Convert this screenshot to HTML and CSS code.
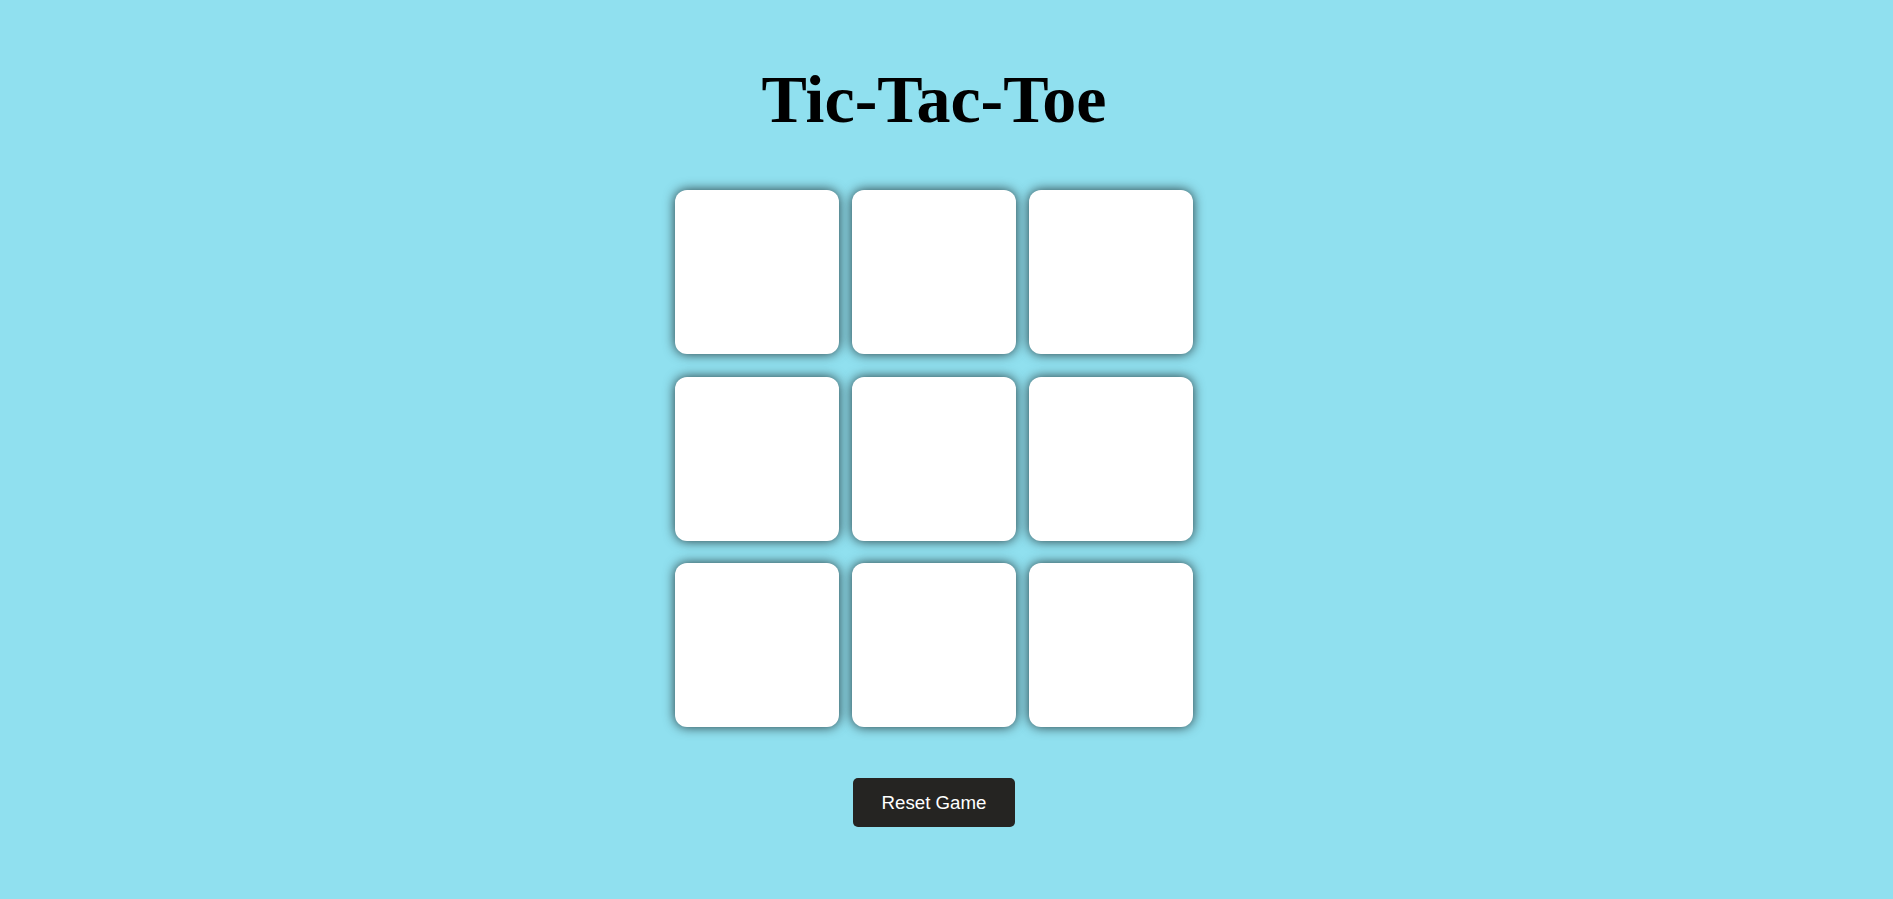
FILE: index.html
```html
<!DOCTYPE html>
<html lang="en">
<head>
<meta charset="utf-8">
<title>Tic-Tac-Toe</title>
<link rel="stylesheet" href="styles.css">
</head>
<body>
<main class="page">
  <h1 class="title">Tic-Tac-Toe</h1>
  <div class="board">
    <div class="cell"></div>
    <div class="cell"></div>
    <div class="cell"></div>
    <div class="cell"></div>
    <div class="cell"></div>
    <div class="cell"></div>
    <div class="cell"></div>
    <div class="cell"></div>
    <div class="cell"></div>
  </div>
  <button class="reset" type="button">Reset Game</button>
</main>
</body>
</html>
```

FILE: styles.css
```css
html, body {
  margin: 0;
  padding: 0;
  background: #90e0ef;
  height: 100%;
}

.page {
  display: flex;
  flex-direction: column;
  align-items: center;
  padding: 62px 25px 0 0;
  box-sizing: border-box;
  min-height: 100%;
}

.title {
  margin: 0;
  font-family: "Liberation Serif", "Times New Roman", serif;
  font-weight: bold;
  font-size: 68px;
  line-height: 75px;
  color: #000;
}

.board {
  margin-top: 53px;
  display: grid;
  grid-template-columns: repeat(3, 164px);
  grid-auto-rows: 164px;
  column-gap: 13px;
  row-gap: 22.5px;
}

.cell {
  background: #fff;
  border-radius: 12px;
  box-shadow: 0 0 12px rgba(0, 0, 0, 0.75);
}

.reset {
  margin-top: 51px;
  width: 162px;
  height: 49px;
  padding: 0;
  border: none;
  border-radius: 5px;
  background: #252422;
  color: #fff;
  font-family: "Liberation Sans", Arial, sans-serif;
  font-size: 18.7px;
  cursor: pointer;
}
```
